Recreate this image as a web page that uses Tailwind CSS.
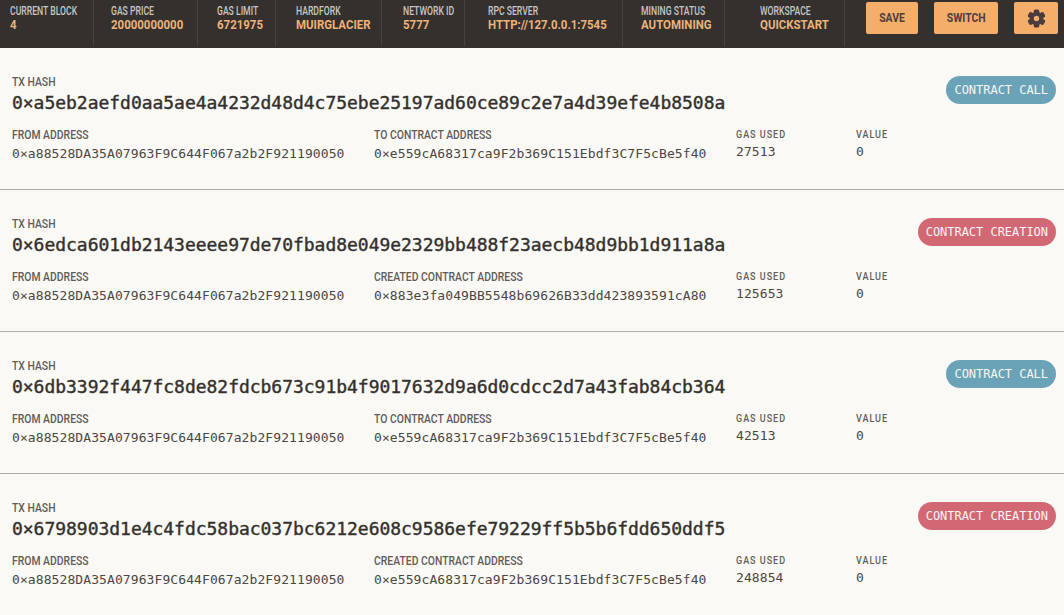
<!DOCTYPE html>
<html class="h-full">
<head>
    <title>Transactions</title>
    <script src="https://cdn.jsdelivr.net/npm/@tailwindcss/browser@4"></script>
</head>
<body class="h-full overflow-hidden bg-[#faf9f5] font-['Roboto',sans-serif]">
    <header class="flex h-[48px] bg-[#33302d]">
        <div class="w-[94px] h-[46px] pl-[10px] pt-[5px] border-r border-[#44413e]">
            <div class="text-[12px] leading-[13px] font-medium text-[#c8c6c3] origin-left scale-x-[.72] whitespace-nowrap">CURRENT BLOCK</div>
            <div class="text-[13px] leading-[13px] font-bold text-[#edb27b] origin-left scale-x-[.88] whitespace-nowrap">4</div>
        </div>
        <div class="w-[104px] h-[46px] pl-[17px] pt-[5px] border-r border-[#44413e]">
            <div class="text-[12px] leading-[13px] font-medium text-[#c8c6c3] origin-left scale-x-[.72] whitespace-nowrap">GAS PRICE</div>
            <div class="text-[13px] leading-[13px] font-bold text-[#edb27b] origin-left scale-x-[.88] whitespace-nowrap">20000000000</div>
        </div>
        <div class="w-[78px] h-[46px] pl-[19px] pt-[5px] border-r border-[#44413e]">
            <div class="text-[12px] leading-[13px] font-medium text-[#c8c6c3] origin-left scale-x-[.72] whitespace-nowrap">GAS LIMIT</div>
            <div class="text-[13px] leading-[13px] font-bold text-[#edb27b] origin-left scale-x-[.88] whitespace-nowrap">6721975</div>
        </div>
        <div class="w-[106px] h-[46px] pl-[20px] pt-[5px] border-r border-[#44413e]">
            <div class="text-[12px] leading-[13px] font-medium text-[#c8c6c3] origin-left scale-x-[.72] whitespace-nowrap">HARDFORK</div>
            <div class="text-[13px] leading-[13px] font-bold text-[#edb27b] origin-left scale-x-[.88] whitespace-nowrap">MUIRGLACIER</div>
        </div>
        <div class="w-[83px] h-[46px] pl-[21px] pt-[5px] border-r border-[#44413e]">
            <div class="text-[12px] leading-[13px] font-medium text-[#c8c6c3] origin-left scale-x-[.72] whitespace-nowrap">NETWORK ID</div>
            <div class="text-[13px] leading-[13px] font-bold text-[#edb27b] origin-left scale-x-[.88] whitespace-nowrap">5777</div>
        </div>
        <div class="w-[158px] h-[46px] pl-[23px] pt-[5px] border-r border-[#44413e]">
            <div class="text-[12px] leading-[13px] font-medium text-[#c8c6c3] origin-left scale-x-[.72] whitespace-nowrap">RPC SERVER</div>
            <div class="text-[13px] leading-[13px] font-bold text-[#edb27b] origin-left scale-x-[.88] whitespace-nowrap">HTTP://127.0.0.1:7545</div>
        </div>
        <div class="w-[102px] h-[46px] pl-[18px] pt-[5px] border-r border-[#44413e]">
            <div class="text-[12px] leading-[13px] font-medium text-[#c8c6c3] origin-left scale-x-[.72] whitespace-nowrap">MINING STATUS</div>
            <div class="text-[13px] leading-[13px] font-bold text-[#edb27b] origin-left scale-x-[.88] whitespace-nowrap">AUTOMINING</div>
        </div>
        <div class="w-[120px] h-[46px] pl-[35px] pt-[5px] border-r border-[#44413e]">
            <div class="text-[12px] leading-[13px] font-medium text-[#c8c6c3] origin-left scale-x-[.72] whitespace-nowrap">WORKSPACE</div>
            <div class="text-[13px] leading-[13px] font-bold text-[#edb27b] origin-left scale-x-[.88] whitespace-nowrap">QUICKSTART</div>
        </div>
        <div class="flex items-start pt-[2px] pl-[21px]">
            <button class="w-[52px] h-[32px] rounded-[2px] bg-[#f5ad6a] text-[13px] font-bold text-[#4a3f3d]"><span class="inline-block scale-x-[.8]">SAVE</span></button>
            <button class="w-[64px] h-[32px] ml-[16px] rounded-[2px] bg-[#f5ad6a] text-[13px] font-bold text-[#4a3f3d]"><span class="inline-block scale-x-[.8]">SWITCH</span></button>
            <button class="w-[44px] h-[32px] ml-[16px] rounded-[2px] bg-[#f5ad6a] flex items-center justify-center">
                <svg width="19" height="19" viewBox="0 0 24 24" fill="#4a3b3d">
                    <rect x="8.5" y="0.5" width="7" height="23" rx="2"/>
                    <rect x="8.5" y="0.5" width="7" height="23" rx="2" transform="rotate(60 12 12)"/>
                    <rect x="8.5" y="0.5" width="7" height="23" rx="2" transform="rotate(120 12 12)"/>
                    <circle cx="12" cy="12" r="8.5"/>
                    <circle cx="12" cy="12" r="3.4" fill="#f5ad6a"/>
                </svg>
            </button>
        </div>
    </header>
    <main>
        <section class="relative h-[142px] pt-[27px] px-[12px] border-b border-[#aeadaa]">
            <div class="text-[13px] leading-[14px] font-medium text-[#5f5c59] origin-left scale-x-[.8]">TX HASH</div>
            <div class="font-['DejaVu_Sans_Mono',monospace] text-[18px] leading-[28px] tracking-[-.03px] [-webkit-text-stroke:0.4px_#33302d] text-[#33302d] whitespace-nowrap">0×a5eb2aefd0aa5ae4a4232d48d4c75ebe25197ad60ce89c2e7a4d39efe4b8508a</div>
            <div class="flex mt-[11px]">
                <div class="w-[362px]">
                    <div class="text-[13px] leading-[14px] font-medium text-[#5f5c59] origin-left scale-x-[.8]">FROM ADDRESS</div>
                    <div class="mt-[2px] font-['DejaVu_Sans_Mono',monospace] text-[13px] leading-[20px] tracking-[.09px] text-[#4a4744]">0×a88528DA35A07963F9C644F067a2b2F921190050</div>
                </div>
                <div class="w-[362px]">
                    <div class="text-[13px] leading-[14px] font-medium text-[#5f5c59] origin-left scale-x-[.8]">TO CONTRACT ADDRESS</div>
                    <div class="mt-[2px] font-['DejaVu_Sans_Mono',monospace] text-[13px] leading-[20px] tracking-[.09px] text-[#4a4744]">0×e559cA68317ca9F2b369C151Ebdf3C7F5cBe5f40</div>
                </div>
                <div class="w-[120px]">
                    <div class="text-[11px] leading-[14px] font-medium tracking-[1.2px] text-[#5f5c59] origin-left scale-x-[.82]">GAS USED</div>
                    <div class="font-['DejaVu_Sans_Mono',monospace] text-[13px] leading-[20px] tracking-[.09px] text-[#4a4744]">27513</div>
                </div>
                <div>
                    <div class="text-[11px] leading-[14px] font-medium tracking-[1.2px] text-[#5f5c59] origin-left scale-x-[.82]">VALUE</div>
                    <div class="font-['DejaVu_Sans_Mono',monospace] text-[13px] leading-[20px] tracking-[.09px] text-[#4a4744]">0</div>
                </div>
            </div>
            <div class="absolute right-[8px] top-[28px] h-[28px] px-[8px] rounded-full bg-[#6aa3b8] font-['DejaVu_Sans_Mono',monospace] text-[12px] leading-[28px] tracking-[-.03px] text-[#f6f6f2] whitespace-pre">CONTRACT CALL</div>
        </section>
        <section class="relative h-[142px] pt-[27px] px-[12px] border-b border-[#aeadaa]">
            <div class="text-[13px] leading-[14px] font-medium text-[#5f5c59] origin-left scale-x-[.8]">TX HASH</div>
            <div class="font-['DejaVu_Sans_Mono',monospace] text-[18px] leading-[28px] tracking-[-.03px] [-webkit-text-stroke:0.4px_#33302d] text-[#33302d] whitespace-nowrap">0×6edca601db2143eeee97de70fbad8e049e2329bb488f23aecb48d9bb1d911a8a</div>
            <div class="flex mt-[11px]">
                <div class="w-[362px]">
                    <div class="text-[13px] leading-[14px] font-medium text-[#5f5c59] origin-left scale-x-[.8]">FROM ADDRESS</div>
                    <div class="mt-[2px] font-['DejaVu_Sans_Mono',monospace] text-[13px] leading-[20px] tracking-[.09px] text-[#4a4744]">0×a88528DA35A07963F9C644F067a2b2F921190050</div>
                </div>
                <div class="w-[362px]">
                    <div class="text-[13px] leading-[14px] font-medium text-[#5f5c59] origin-left scale-x-[.8]">CREATED CONTRACT ADDRESS</div>
                    <div class="mt-[2px] font-['DejaVu_Sans_Mono',monospace] text-[13px] leading-[20px] tracking-[.09px] text-[#4a4744]">0×883e3fa049BB5548b69626B33dd423893591cA80</div>
                </div>
                <div class="w-[120px]">
                    <div class="text-[11px] leading-[14px] font-medium tracking-[1.2px] text-[#5f5c59] origin-left scale-x-[.82]">GAS USED</div>
                    <div class="font-['DejaVu_Sans_Mono',monospace] text-[13px] leading-[20px] tracking-[.09px] text-[#4a4744]">125653</div>
                </div>
                <div>
                    <div class="text-[11px] leading-[14px] font-medium tracking-[1.2px] text-[#5f5c59] origin-left scale-x-[.82]">VALUE</div>
                    <div class="font-['DejaVu_Sans_Mono',monospace] text-[13px] leading-[20px] tracking-[.09px] text-[#4a4744]">0</div>
                </div>
            </div>
            <div class="absolute right-[8px] top-[28px] h-[28px] px-[8px] rounded-full bg-[#d26874] font-['DejaVu_Sans_Mono',monospace] text-[12px] leading-[28px] tracking-[-.03px] text-[#f6f6f2] whitespace-pre">CONTRACT CREATION</div>
        </section>
        <section class="relative h-[142px] pt-[27px] px-[12px] border-b border-[#aeadaa]">
            <div class="text-[13px] leading-[14px] font-medium text-[#5f5c59] origin-left scale-x-[.8]">TX HASH</div>
            <div class="font-['DejaVu_Sans_Mono',monospace] text-[18px] leading-[28px] tracking-[-.03px] [-webkit-text-stroke:0.4px_#33302d] text-[#33302d] whitespace-nowrap">0×6db3392f447fc8de82fdcb673c91b4f9017632d9a6d0cdcc2d7a43fab84cb364</div>
            <div class="flex mt-[11px]">
                <div class="w-[362px]">
                    <div class="text-[13px] leading-[14px] font-medium text-[#5f5c59] origin-left scale-x-[.8]">FROM ADDRESS</div>
                    <div class="mt-[2px] font-['DejaVu_Sans_Mono',monospace] text-[13px] leading-[20px] tracking-[.09px] text-[#4a4744]">0×a88528DA35A07963F9C644F067a2b2F921190050</div>
                </div>
                <div class="w-[362px]">
                    <div class="text-[13px] leading-[14px] font-medium text-[#5f5c59] origin-left scale-x-[.8]">TO CONTRACT ADDRESS</div>
                    <div class="mt-[2px] font-['DejaVu_Sans_Mono',monospace] text-[13px] leading-[20px] tracking-[.09px] text-[#4a4744]">0×e559cA68317ca9F2b369C151Ebdf3C7F5cBe5f40</div>
                </div>
                <div class="w-[120px]">
                    <div class="text-[11px] leading-[14px] font-medium tracking-[1.2px] text-[#5f5c59] origin-left scale-x-[.82]">GAS USED</div>
                    <div class="font-['DejaVu_Sans_Mono',monospace] text-[13px] leading-[20px] tracking-[.09px] text-[#4a4744]">42513</div>
                </div>
                <div>
                    <div class="text-[11px] leading-[14px] font-medium tracking-[1.2px] text-[#5f5c59] origin-left scale-x-[.82]">VALUE</div>
                    <div class="font-['DejaVu_Sans_Mono',monospace] text-[13px] leading-[20px] tracking-[.09px] text-[#4a4744]">0</div>
                </div>
            </div>
            <div class="absolute right-[8px] top-[28px] h-[28px] px-[8px] rounded-full bg-[#6aa3b8] font-['DejaVu_Sans_Mono',monospace] text-[12px] leading-[28px] tracking-[-.03px] text-[#f6f6f2] whitespace-pre">CONTRACT CALL</div>
        </section>
        <section class="relative h-[142px] pt-[27px] px-[12px]">
            <div class="text-[13px] leading-[14px] font-medium text-[#5f5c59] origin-left scale-x-[.8]">TX HASH</div>
            <div class="font-['DejaVu_Sans_Mono',monospace] text-[18px] leading-[28px] tracking-[-.03px] [-webkit-text-stroke:0.4px_#33302d] text-[#33302d] whitespace-nowrap">0×6798903d1e4c4fdc58bac037bc6212e608c9586efe79229ff5b5b6fdd650ddf5</div>
            <div class="flex mt-[11px]">
                <div class="w-[362px]">
                    <div class="text-[13px] leading-[14px] font-medium text-[#5f5c59] origin-left scale-x-[.8]">FROM ADDRESS</div>
                    <div class="mt-[2px] font-['DejaVu_Sans_Mono',monospace] text-[13px] leading-[20px] tracking-[.09px] text-[#4a4744]">0×a88528DA35A07963F9C644F067a2b2F921190050</div>
                </div>
                <div class="w-[362px]">
                    <div class="text-[13px] leading-[14px] font-medium text-[#5f5c59] origin-left scale-x-[.8]">CREATED CONTRACT ADDRESS</div>
                    <div class="mt-[2px] font-['DejaVu_Sans_Mono',monospace] text-[13px] leading-[20px] tracking-[.09px] text-[#4a4744]">0×e559cA68317ca9F2b369C151Ebdf3C7F5cBe5f40</div>
                </div>
                <div class="w-[120px]">
                    <div class="text-[11px] leading-[14px] font-medium tracking-[1.2px] text-[#5f5c59] origin-left scale-x-[.82]">GAS USED</div>
                    <div class="font-['DejaVu_Sans_Mono',monospace] text-[13px] leading-[20px] tracking-[.09px] text-[#4a4744]">248854</div>
                </div>
                <div>
                    <div class="text-[11px] leading-[14px] font-medium tracking-[1.2px] text-[#5f5c59] origin-left scale-x-[.82]">VALUE</div>
                    <div class="font-['DejaVu_Sans_Mono',monospace] text-[13px] leading-[20px] tracking-[.09px] text-[#4a4744]">0</div>
                </div>
            </div>
            <div class="absolute right-[8px] top-[28px] h-[28px] px-[8px] rounded-full bg-[#d26874] font-['DejaVu_Sans_Mono',monospace] text-[12px] leading-[28px] tracking-[-.03px] text-[#f6f6f2] whitespace-pre">CONTRACT CREATION</div>
        </section>
    </main>
</body>
</html>
